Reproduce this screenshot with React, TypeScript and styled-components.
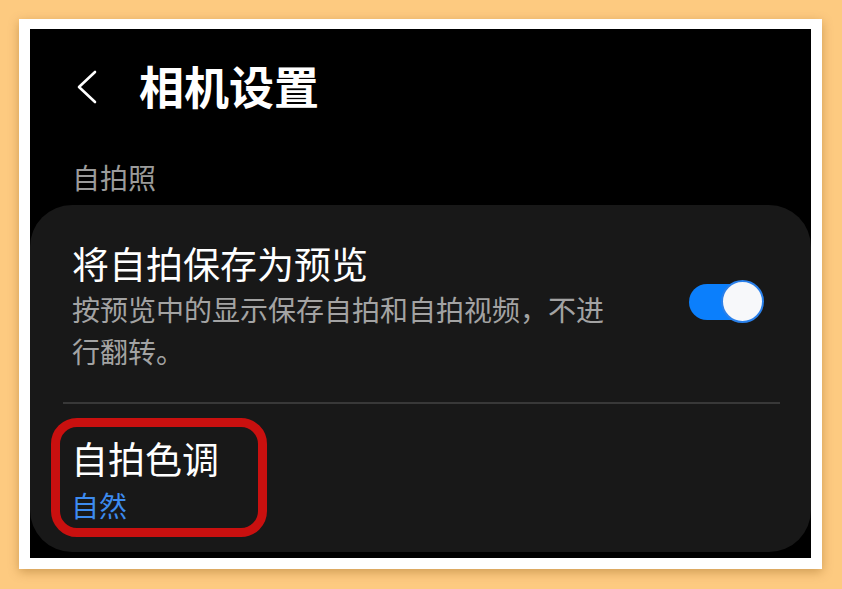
import styled, { createGlobalStyle } from "styled-components";

const GlobalStyle = createGlobalStyle`
    html, body {
        margin: 0;
        padding: 0;
        background-color: #fdca80;
    }
    * {
        box-sizing: border-box;
    }
`;

const Page = styled.div`
    display: flex;
    width: 842px;
    height: 589px;
    padding: 19px 20px 20px 19px;
    background-color: #fdca80;
    font-family: "Noto Sans CJK SC", "Noto Sans", sans-serif;
`;

const Frame = styled.div`
    display: flex;
    flex: 1;
    padding: 10px 11px 11px 11px;
    background-color: #ffffff;
    box-shadow: 0 3px 10px rgba(120, 70, 0, 0.35);
`;

const Screen = styled.div`
    display: flex;
    flex-direction: column;
    flex: 1;
    background-color: #000000;
    overflow: hidden;
`;

const Header = styled.div`
    display: flex;
    align-items: center;
    height: 114px;
    padding-left: 46px;
    gap: 41px;
`;

const BackIcon = styled.svg`
    width: 22px;
    height: 34px;
    margin-top: 2px;
`;

const Title = styled.h1`
    margin: 0;
    font-size: 45px;
    font-weight: 700;
    line-height: 52px;
    color: #ffffff;
`;

const SectionLabel = styled.div`
    padding: 14px 0 0 42px;
    font-size: 28px;
    line-height: 40px;
    color: #9b9b9b;
`;

const Card = styled.div`
    display: flex;
    flex-direction: column;
    margin-top: 8px;
    background-color: #181818;
    border-radius: 42px;
`;

const SwitchRow = styled.div`
    display: flex;
    align-items: flex-start;
    justify-content: space-between;
    padding: 36px 47px 30px 42px;
`;

const TextBlock = styled.div`
    display: flex;
    flex-direction: column;
`;

const ItemTitle = styled.div`
    font-size: 37px;
    line-height: 44px;
    color: #ffffff;
`;

const ItemDescription = styled.div`
    max-width: 545px;
    margin-top: 4px;
    font-size: 28px;
    line-height: 41.5px;
    color: #a3a3a3;
`;

const ItemValue = styled.div`
    margin-top: 7px;
    font-size: 28px;
    line-height: 36px;
    color: #3d8bef;
`;

const Switch = styled.div`
    position: relative;
    flex-shrink: 0;
    width: 75px;
    height: 43px;
    margin-top: 39px;
`;

const SwitchTrack = styled.div<{ $on: boolean }>`
    position: absolute;
    left: 0;
    top: 4px;
    width: 70px;
    height: 36px;
    border-radius: 18px;
    background-color: ${(p) => (p.$on ? "#0b7ffc" : "#5a5a5a")};
`;

const SwitchKnob = styled.div<{ $on: boolean }>`
    position: absolute;
    top: 0;
    ${(p) => (p.$on ? "right: 0;" : "left: 0;")}
    width: 43px;
    height: 43px;
    border-radius: 50%;
    background-color: #f7f8fa;
    border: 2px solid #2a80ea;
`;

const Divider = styled.div`
    height: 2px;
    margin: 0 31px 0 33px;
    background-color: #383838;
`;

const ValueRow = styled.div`
    position: relative;
    display: flex;
    flex-direction: column;
    padding: 32px 43px 29px 41px;
`;

const Highlight = styled.div`
    position: absolute;
    top: 14px;
    left: 21px;
    width: 216px;
    height: 119px;
    border: 9px solid #c9100f;
    border-radius: 26px;
    pointer-events: none;
`;

export default function App() {
    return (
        <>
            <GlobalStyle />
            <Page>
                <Frame>
                    <Screen>
                        <Header>
                            <BackIcon viewBox="0 0 22 34" fill="none">
                                <polyline
                                    points="19,2 3,17 19,32"
                                    stroke="#ffffff"
                                    strokeWidth="2.6"
                                    strokeLinecap="round"
                                    strokeLinejoin="round"
                                />
                            </BackIcon>
                            <Title>相机设置</Title>
                        </Header>
                        <SectionLabel>自拍照</SectionLabel>
                        <Card>
                            <SwitchRow>
                                <TextBlock>
                                    <ItemTitle>将自拍保存为预览</ItemTitle>
                                    <ItemDescription>
                                        按预览中的显示保存自拍和自拍视频，不进行翻转。
                                    </ItemDescription>
                                </TextBlock>
                                <Switch>
                                    <SwitchTrack $on={true} />
                                    <SwitchKnob $on={true} />
                                </Switch>
                            </SwitchRow>
                            <Divider />
                            <ValueRow>
                                <ItemTitle>自拍色调</ItemTitle>
                                <ItemValue>自然</ItemValue>
                                <Highlight />
                            </ValueRow>
                        </Card>
                    </Screen>
                </Frame>
            </Page>
        </>
    );
}
